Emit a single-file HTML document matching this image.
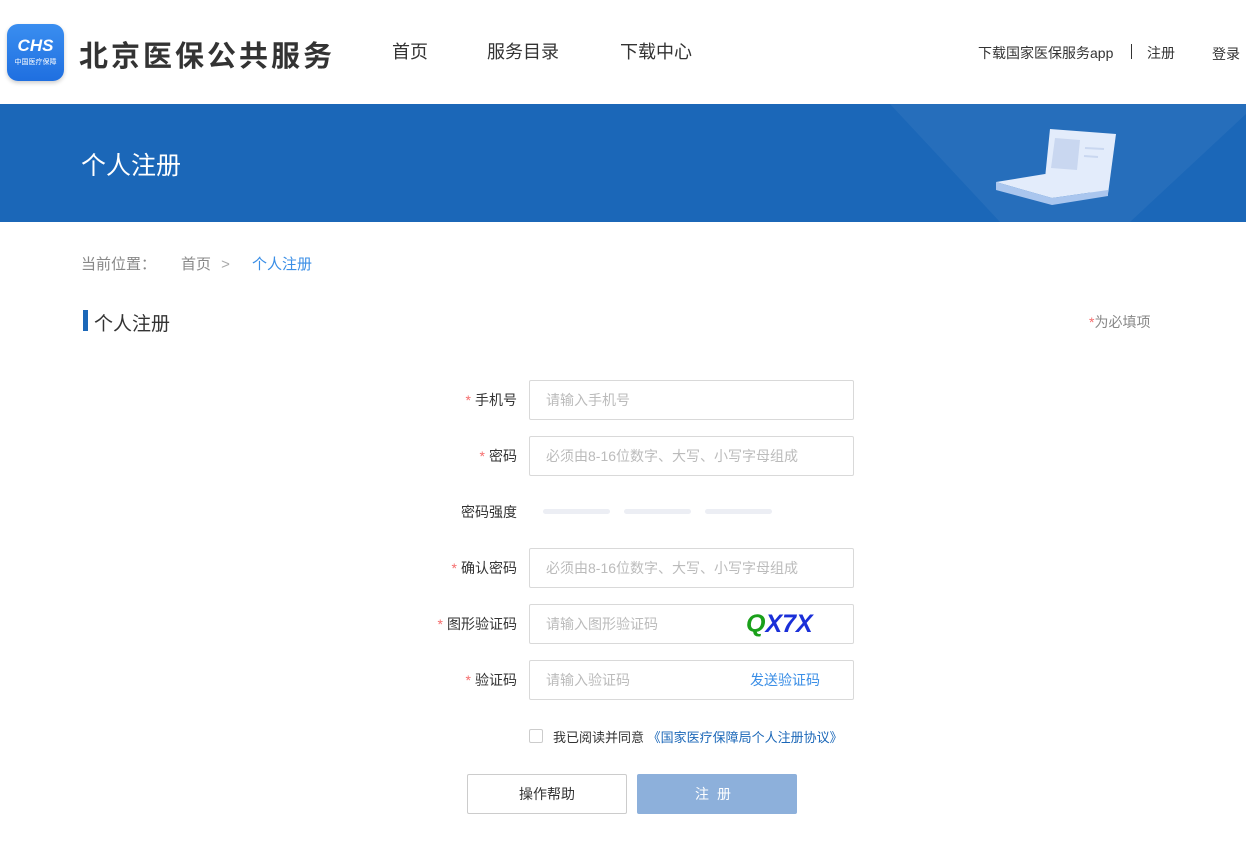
<!DOCTYPE html>
<html><head><meta charset="utf-8"><style>
*{margin:0;padding:0;box-sizing:border-box}
body{width:1246px;height:841px;background:#fff;font-family:"Liberation Sans","Noto Sans CJK SC",sans-serif;color:#333;position:relative;overflow:hidden}
.a{position:absolute;white-space:nowrap}
.inp{position:absolute;left:529px;width:325px;height:40px;border:1px solid #d9d9d9;border-radius:2px;font-size:14px;color:#bbb;padding-left:16px;line-height:38px}
.lab{position:absolute;right:729px;font-size:14px;color:#333;line-height:40px}
.lab b{color:#f56c6c;font-weight:normal;margin-right:4px}
</style></head><body>
<div class="a" style="left:7px;top:24px;width:57px;height:57px;border-radius:11px;background:linear-gradient(#3a8ef0,#1f6fe0);box-shadow:0 2px 4px rgba(0,0,0,.2)">
<div class="a" style="left:0;width:57px;top:12px;text-align:center;color:#fff;font-weight:bold;font-style:italic;font-size:17px">CHS</div>
<div class="a" style="left:0;width:57px;top:33px;text-align:center;color:#fff;font-size:7px">中国医疗保障</div></div>
<div class="a" style="left:79px;top:33px;font-size:29px;font-weight:bold;color:#333;letter-spacing:3px">北京医保公共服务</div>
<div class="a" style="left:392px;top:38px;font-size:18px;color:#333">首页</div>
<div class="a" style="left:487px;top:38px;font-size:18px;color:#333">服务目录</div>
<div class="a" style="left:620px;top:38px;font-size:18px;color:#333">下载中心</div>
<div class="a" style="left:978px;top:43px;font-size:14px;color:#333">下载国家医保服务app</div>
<div class="a" style="left:1131px;top:44px;width:1px;height:15px;background:#333"></div>
<div class="a" style="left:1147px;top:43px;font-size:14px;color:#333">注册</div>
<div class="a" style="left:1212px;top:44px;font-size:14px;color:#333">登录</div>
<div class="a" style="left:0;top:104px;width:1246px;height:118px;background:#1b67b8;overflow:hidden">
<svg class="a" style="left:880px;top:0" width="366" height="118"><polygon points="10,0 366,0 366,10 250,118 120,118" fill="#fff" opacity=".05"/>
<polygon points="170,25 236,30 228,90 164,84" fill="#e3ecfb"/><polygon points="175,34 200,36 197,66 171,64" fill="#c9d7f0"/>
<line x1="205" y1="44" x2="224" y2="45" stroke="#c9d7f0" stroke-width="2"/><line x1="204" y1="52" x2="218" y2="53" stroke="#c9d7f0" stroke-width="2"/>
<polygon points="116,78 165,70 228,86 172,94" fill="#e3ecfb"/><polygon points="116,78 116,86 172,101 228,92 228,86 172,94" fill="#aac6ee"/></svg></div>
<div class="a" style="left:81px;top:146px;font-size:25px;color:#fff">个人注册</div>
<div class="a" style="left:81px;top:253px;font-size:15px;color:#888">当前位置：</div>
<div class="a" style="left:181px;top:253px;font-size:15px;color:#888">首页 <span style="margin-left:6px;color:#aaa">&gt;</span></div>
<div class="a" style="left:252px;top:253px;font-size:15px;color:#3a8ee6">个人注册</div>
<div class="a" style="left:83px;top:310px;width:5px;height:21px;background:#1b67b8"></div>
<div class="a" style="left:94px;top:309px;font-size:19px;color:#333">个人注册</div>
<div class="a" style="left:1089px;top:312px;font-size:14px;color:#888"><span style="color:#f56c6c">*</span>为必填项</div>
<div class="lab" style="top:380px"><b>*</b>手机号</div><div class="inp" style="top:380px">请输入手机号</div>
<div class="lab" style="top:436px"><b>*</b>密码</div><div class="inp" style="top:436px">必须由8-16位数字、大写、小写字母组成</div>
<div class="lab" style="top:492px">密码强度</div>
<div class="a" style="left:543px;top:509px;width:67px;height:5px;border-radius:3px;background:#eceef4"></div>
<div class="a" style="left:624px;top:509px;width:67px;height:5px;border-radius:3px;background:#eceef4"></div>
<div class="a" style="left:705px;top:509px;width:67px;height:5px;border-radius:3px;background:#eceef4"></div>
<div class="lab" style="top:548px"><b>*</b>确认密码</div><div class="inp" style="top:548px">必须由8-16位数字、大写、小写字母组成</div>
<div class="lab" style="top:604px"><b>*</b>图形验证码</div><div class="inp" style="top:604px">请输入图形验证码
<div class="a" style="left:216px;top:0;font-size:25px;font-weight:bold;font-style:italic;color:#1a2fd8;line-height:38px"><span style="color:#1aa01a">Q</span>X7X</div></div>
<div class="lab" style="top:660px"><b>*</b>验证码</div><div class="inp" style="top:660px">请输入验证码<span class="a" style="left:220px;color:#3a8ee6">发送验证码</span></div>
<div class="a" style="left:529px;top:729px;width:14px;height:14px;border:1px solid #ccc;border-radius:2px"></div>
<div class="a" style="left:553px;top:727px;font-size:13px;color:#333">我已阅读并同意 <span style="color:#1b67b8">《国家医疗保障局个人注册协议》</span></div>
<div class="a" style="left:467px;top:774px;width:160px;height:40px;border:1px solid #ccc;border-radius:2px;text-align:center;line-height:38px;font-size:14px;color:#333">操作帮助</div>
<div class="a" style="left:637px;top:774px;width:160px;height:40px;background:#8db0db;border-radius:2px;text-align:center;line-height:40px;font-size:14px;color:#fff;letter-spacing:8px">注册</div>
</body></html>
